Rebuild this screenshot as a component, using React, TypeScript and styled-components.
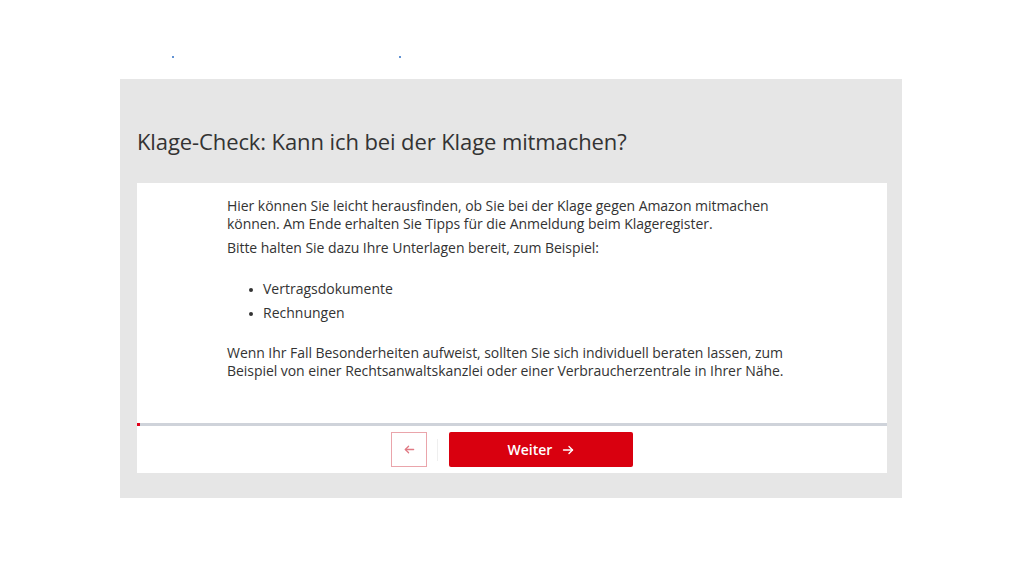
import React from 'react';
import styled, { createGlobalStyle } from 'styled-components';

const GlobalStyle = createGlobalStyle`
  html, body {
    margin: 0;
    padding: 0;
    background: #fff;
  }
  body {
    font-family: "Open Sans", "Noto Sans", "Liberation Sans", sans-serif;
    color: #333;
  }
`;

const Page = styled.div`
  width: 1024px;
  height: 577px;
  overflow: hidden;
`;

const DotRow = styled.div`
  height: 79px;
  display: flex;
  align-items: flex-start;
  padding-left: 172px;
  box-sizing: border-box;
  padding-top: 56px;
  gap: 225px;
`;

const Dot = styled.span`
  width: 2px;
  height: 2px;
  background: #2f6fc4;
  border-radius: 50%;
`;

const Panel = styled.section`
  margin-left: 120px;
  width: 782px;
  height: 419px;
  background: #e6e6e6;
  padding: 0 15px 0 17px;
  box-sizing: border-box;
`;

const Title = styled.h1`
  margin: 0;
  height: 104px;
  display: flex;
  align-items: center;
  padding-top: 20px;
  box-sizing: border-box;
  font-size: 22px;
  font-weight: 400;
  color: #333;
  letter-spacing: -0.1px;
`;

const Card = styled.div`
  background: #fff;
  height: 290px;
  display: flex;
  flex-direction: column;
`;

const Content = styled.div`
  flex: 1;
  padding: 14px 60px 0 90px;
  font-size: 14px;
  line-height: 18px;
  color: #333;
`;

const Para = styled.p`
  margin: 0 0 6px 0;
  letter-spacing: -0.05px;
`;

const List = styled.ul`
  margin: 23px 0 22px 0;
  padding-left: 36px;
  list-style: none;
`;

const Item = styled.li`
  position: relative;
  line-height: 18px;
  margin-bottom: 6px;
  &::before {
    content: '';
    position: absolute;
    left: -14px;
    top: 8px;
    width: 4px;
    height: 4px;
    border-radius: 50%;
    background: #333;
  }
`;

const Progress = styled.div`
  height: 3px;
  background: #cfd3da;
  position: relative;
  &::before {
    content: '';
    position: absolute;
    left: 0;
    top: 0;
    width: 3px;
    height: 3px;
    background: #e0001a;
  }
`;

const Nav = styled.div`
  height: 47px;
  display: flex;
  align-items: center;
  padding-left: 254px;
`;

const BackButton = styled.button`
  width: 36px;
  height: 35px;
  border: 1px solid #eaa5ab;
  background: #fff;
  display: flex;
  align-items: center;
  justify-content: center;
  padding: 0;
  cursor: pointer;
`;

const Sep = styled.span`
  width: 1px;
  height: 22px;
  background: #efefef;
  margin: 0 11px 0 10px;
`;

const NextButton = styled.button`
  width: 184px;
  height: 35px;
  border: none;
  border-radius: 2px;
  background: #d9000f;
  color: #fff;
  font-family: inherit;
  font-size: 14px;
  font-weight: 600;
  display: flex;
  align-items: center;
  justify-content: center;
  gap: 10px;
  cursor: pointer;
`;

const Arrow = ({ dir, color, size = 12 }: { dir: 'left' | 'right'; color: string; size?: number }) => (
  <svg width={size} height={size} viewBox="0 0 12 12" fill="none" stroke={color} strokeWidth="1.4" strokeLinecap="round" strokeLinejoin="round">
    {dir === 'right' ? (
      <>
        <path d="M1.5 6h9" />
        <path d="M7 2.5L10.5 6 7 9.5" />
      </>
    ) : (
      <>
        <path d="M10.5 6h-9" />
        <path d="M5 2.5L1.5 6 5 9.5" />
      </>
    )}
  </svg>
);

export default function App() {
  return (
    <Page>
      <GlobalStyle />
      <DotRow>
        <Dot />
        <Dot />
      </DotRow>
      <Panel>
        <Title>Klage-Check: Kann ich bei der Klage mitmachen?</Title>
        <Card>
          <Content>
            <Para>
              Hier können Sie leicht herausfinden, ob Sie bei der Klage gegen Amazon mitmachen
              <br />
              können. Am Ende erhalten Sie Tipps für die Anmeldung beim Klageregister.
            </Para>
            <Para>Bitte halten Sie dazu Ihre Unterlagen bereit, zum Beispiel:</Para>
            <List>
              <Item>Vertragsdokumente</Item>
              <Item>Rechnungen</Item>
            </List>
            <Para>
              Wenn Ihr Fall Besonderheiten aufweist, sollten Sie sich individuell beraten lassen, zum
              <br />
              Beispiel von einer Rechtsanwaltskanzlei oder einer Verbraucherzentrale in Ihrer Nähe.
            </Para>
          </Content>
          <Progress />
          <Nav>
            <BackButton aria-label="Zurück">
              <Arrow dir="left" color="#e07a84" size={11} />
            </BackButton>
            <Sep />
            <NextButton>
              Weiter
              <Arrow dir="right" color="#fff" />
            </NextButton>
          </Nav>
        </Card>
      </Panel>
    </Page>
  );
}
